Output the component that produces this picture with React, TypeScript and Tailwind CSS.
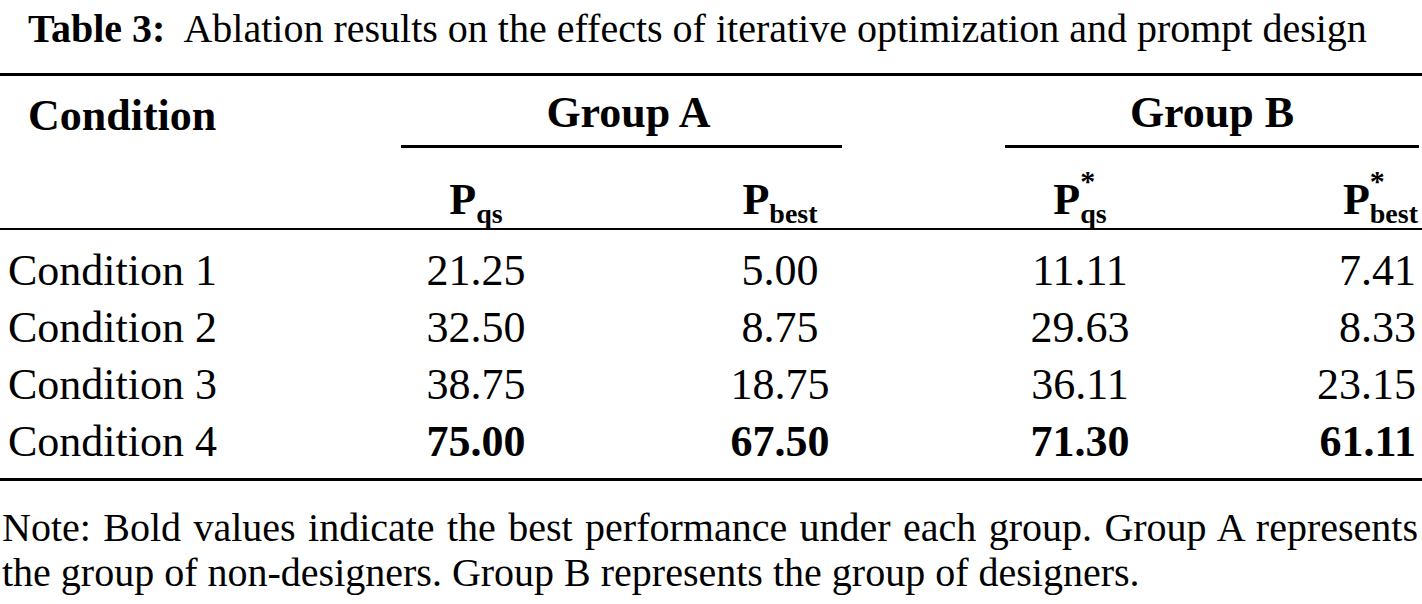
const rows = [
  { label: "Condition 1", vals: ["21.25", "5.00", "11.11", "7.41"], bold: false },
  { label: "Condition 2", vals: ["32.50", "8.75", "29.63", "8.33"], bold: false },
  { label: "Condition 3", vals: ["38.75", "18.75", "36.11", "23.15"], bold: false },
  { label: "Condition 4", vals: ["75.00", "67.50", "71.30", "61.11"], bold: true },
];

const serif = { fontFamily: '"Liberation Serif", "Times New Roman", serif' };

// P with a subscript, and optional star on top
const PSym = ({ sub, star }: { sub: string; star?: boolean }) => (
  <span className="inline-flex items-end font-bold leading-none">
    <span className="text-[44px]">P</span>
    <span className="flex flex-col items-start leading-none">
      {star && <span className="text-[30px] -mb-[2px]">*</span>}
      <span className="text-[28px] translate-y-[6px]">{sub}</span>
    </span>
  </span>
);

const App = () => {
  return (
    <div className="w-[1422px] h-[604px] bg-white text-black" style={serif}>
      <div className="h-[73px] pl-[28px] pt-[5px] text-[40px] leading-[48px]">
        <span className="font-bold">Table 3:</span>
        <span className="ml-[18px]">Ablation results on the effects of iterative optimization and prompt design</span>
      </div>

      <div className="grid grid-cols-[401px_150px_167px_124px_163px_150px_1fr] border-t-[3px] border-black text-[44px] leading-none">
        {/* header row 1 */}
        <div className="h-[72px] flex items-end pb-[10px] pl-[28px] font-bold">Condition</div>
        <div className="col-span-3 h-[72px] flex items-end justify-center pb-[10px] pl-[14px] font-bold border-b-[3px] border-black">
          Group A
        </div>
        <div />
        <div className="col-span-2 h-[72px] flex items-end justify-center pb-[10px] font-bold border-b-[3px] border-black mr-[3px]">
          Group B
        </div>

        {/* header row 2 */}
        <div className="col-span-7 grid grid-cols-subgrid h-[82px] border-b-2 border-black">
          <div />
          <div className="flex items-end justify-center pb-[6px]">
            <PSym sub="qs" />
          </div>
          <div />
          <div className="flex items-end justify-center pb-[6px]">
            <PSym sub="best" />
          </div>
          <div />
          <div className="flex items-end justify-center pb-[6px]">
            <PSym sub="qs" star />
          </div>
          <div className="flex items-end justify-end pr-[4px] pb-[6px]">
            <PSym sub="best" star />
          </div>
        </div>

        {/* body */}
        <div className="col-span-7 grid grid-cols-subgrid pt-[12px] pb-[8px] border-b-[3px] border-black">
          {rows.map((r) => (
            <div key={r.label} className="col-span-7 grid grid-cols-subgrid h-[57px] items-center">
              <div className="pl-[8px]">{r.label}</div>
              <div className={`text-center ${r.bold ? "font-bold" : ""}`}>{r.vals[0]}</div>
              <div />
              <div className={`text-center ${r.bold ? "font-bold" : ""}`}>{r.vals[1]}</div>
              <div />
              <div className={`text-center ${r.bold ? "font-bold" : ""}`}>{r.vals[2]}</div>
              <div className={`text-right pr-[6px] ${r.bold ? "font-bold" : ""}`}>{r.vals[3]}</div>
            </div>
          ))}
        </div>
      </div>

      <div className="pt-[24px] pl-[2px] pr-[4px] text-[40px] leading-[45px]">
        <div className="text-justify [text-align-last:justify]">
          Note: Bold values indicate the best performance under each group. Group A represents
        </div>
        <div>the group of non-designers. Group B represents the group of designers.</div>
      </div>
    </div>
  );
};

export default App;
